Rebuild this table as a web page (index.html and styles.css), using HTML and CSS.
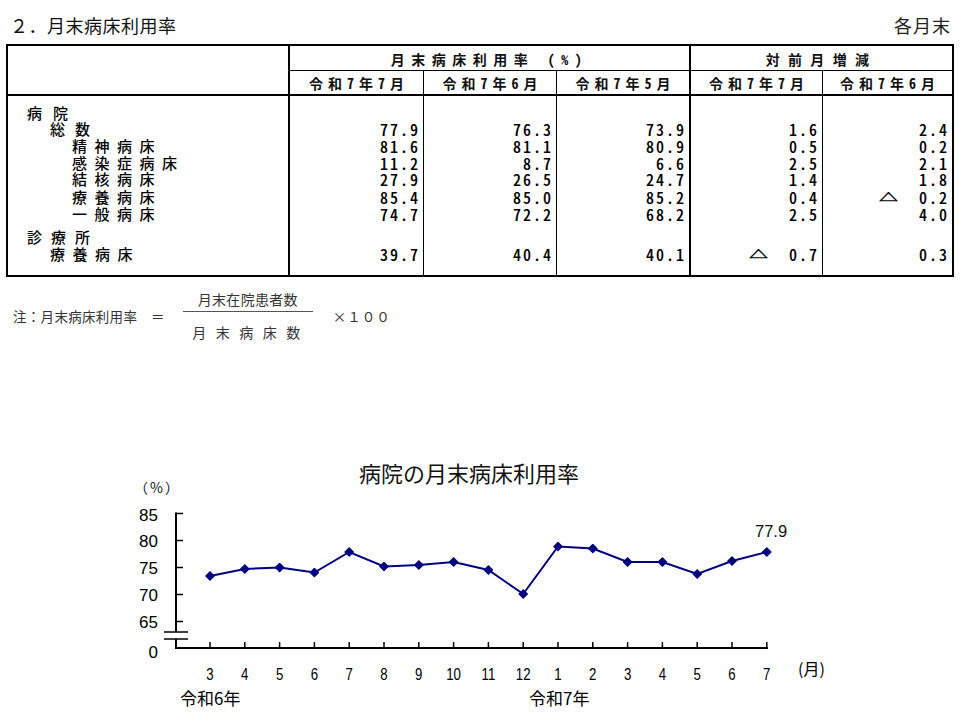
FILE: index.html
```html
<!DOCTYPE html>
<html lang="ja">
<head>
<meta charset="utf-8">
<title>月末病床利用率</title>
<link rel="stylesheet" href="styles.css">
</head>
<body>
<div class="page">
  <header class="title-row">
    <h1 class="title">２．月末病床利用率</h1>
    <span class="unit">各月末</span>
  </header>

  <table class="stats">
    <colgroup>
      <col class="c0"><col class="c1"><col class="c2"><col class="c3"><col class="c4"><col class="c5">
    </colgroup>
    <thead>
      <tr class="h1">
        <th rowspan="2" class="blank"></th>
        <th colspan="3" class="grp">月末病床利用率 （%）</th>
        <th colspan="2" class="grp2">対前月増減</th>
      </tr>
      <tr class="h2">
        <th>令和7年7月</th>
        <th>令和7年6月</th>
        <th>令和7年5月</th>
        <th>令和7年7月</th>
        <th>令和7年6月</th>
      </tr>
    </thead>
    <tbody>
      <tr class="first">
        <td class="lbl lv0 w2">病院</td><td></td><td></td><td></td><td></td><td></td>
      </tr>
      <tr>
        <td class="lbl lv1 w1">総数</td><td>77.9</td><td>76.3</td><td>73.9</td><td>1.6</td><td>2.4</td>
      </tr>
      <tr>
        <td class="lbl lv2">精神病床</td><td>81.6</td><td>81.1</td><td>80.9</td><td>0.5</td><td>0.2</td>
      </tr>
      <tr>
        <td class="lbl lv2">感染症病床</td><td>11.2</td><td>8.7</td><td>6.6</td><td>2.5</td><td>2.1</td>
      </tr>
      <tr>
        <td class="lbl lv2">結核病床</td><td>27.9</td><td>26.5</td><td>24.7</td><td>1.4</td><td>1.8</td>
      </tr>
      <tr>
        <td class="lbl lv2">療養病床</td><td>85.4</td><td>85.0</td><td>85.2</td><td>0.4</td><td><span class="tri">△</span>0.2</td>
      </tr>
      <tr>
        <td class="lbl lv2">一般病床</td><td>74.7</td><td>72.2</td><td>68.2</td><td>2.5</td><td>4.0</td>
      </tr>
      <tr class="gap">
        <td class="lbl lv0 w3">診療所</td><td></td><td></td><td></td><td></td><td></td>
      </tr>
      <tr class="last">
        <td class="lbl lv1">療養病床</td><td>39.7</td><td>40.4</td><td>40.1</td><td><span class="tri">△</span>0.7</td><td>0.3</td>
      </tr>
    </tbody>
  </table>

  <div class="note">
    <span class="note-label">注：月末病床利用率　＝</span>
    <div class="frac">
      <span class="num">月末在院患者数</span>
      <span class="bar"></span>
      <span class="den">月 末 病 床 数</span>
    </div>
    <span class="times">×１００</span>
  </div>

  <svg class="chart" viewBox="0 440 960 280" width="960" height="280">
    <defs>
      <marker id="dia" viewBox="-5 -5 10 10" markerWidth="10" markerHeight="10" markerUnits="userSpaceOnUse">
        <path d="M0 -5 L5 0 L0 5 L-5 0 Z" fill="#000080"/>
      </marker>
    </defs>
    <text class="ch-title" x="469" y="482" text-anchor="middle">病院の月末病床利用率</text>
    <text class="ch-unit" x="134" y="493">（%）</text>

    <g class="axis">
      <line x1="176" y1="512.5" x2="176" y2="632"/>
      <line x1="176" y1="639" x2="176" y2="648"/>
      <line x1="175" y1="648" x2="768" y2="648"/>
    </g>
    <g class="ticks">
      <line x1="176" y1="513.5" x2="183" y2="513.5"/>
      <line x1="176" y1="540.5" x2="183" y2="540.5"/>
      <line x1="176" y1="567.5" x2="183" y2="567.5"/>
      <line x1="176" y1="594.5" x2="183" y2="594.5"/>
      <line x1="176" y1="621.5" x2="183" y2="621.5"/>
      <line x1="164" y1="632" x2="188" y2="632"/>
      <line x1="164" y1="639" x2="188" y2="639"/>
      <line x1="210" y1="642" x2="210" y2="648"/>
      <line x1="244.8" y1="642" x2="244.8" y2="648"/>
      <line x1="279.6" y1="642" x2="279.6" y2="648"/>
      <line x1="314.4" y1="642" x2="314.4" y2="648"/>
      <line x1="349.2" y1="642" x2="349.2" y2="648"/>
      <line x1="384" y1="642" x2="384" y2="648"/>
      <line x1="418.8" y1="642" x2="418.8" y2="648"/>
      <line x1="453.6" y1="642" x2="453.6" y2="648"/>
      <line x1="488.4" y1="642" x2="488.4" y2="648"/>
      <line x1="523.2" y1="642" x2="523.2" y2="648"/>
      <line x1="558" y1="642" x2="558" y2="648"/>
      <line x1="592.8" y1="642" x2="592.8" y2="648"/>
      <line x1="627.6" y1="642" x2="627.6" y2="648"/>
      <line x1="662.4" y1="642" x2="662.4" y2="648"/>
      <line x1="697.2" y1="642" x2="697.2" y2="648"/>
      <line x1="732" y1="642" x2="732" y2="648"/>
      <line x1="766.8" y1="642" x2="766.8" y2="648"/>
    </g>

    <g class="ylab">
      <text x="158" y="521">85</text>
      <text x="158" y="547">80</text>
      <text x="158" y="574">75</text>
      <text x="158" y="601">70</text>
      <text x="158" y="628">65</text>
      <text x="158" y="658">0</text>
    </g>

    <g class="xlab">
      <text x="210" y="680">3</text>
      <text x="244.8" y="680">4</text>
      <text x="279.6" y="680">5</text>
      <text x="314.4" y="680">6</text>
      <text x="349.2" y="680">7</text>
      <text x="384" y="680">8</text>
      <text x="418.8" y="680">9</text>
      <text x="453.6" y="680">10</text>
      <text x="488.4" y="680">11</text>
      <text x="523.2" y="680">12</text>
      <text x="558" y="680">1</text>
      <text x="592.8" y="680">2</text>
      <text x="627.6" y="680">3</text>
      <text x="662.4" y="680">4</text>
      <text x="697.2" y="680">5</text>
      <text x="732" y="680">6</text>
      <text x="766.8" y="680">7</text>
    </g>
    <text class="ch-month" x="798" y="675">(月)</text>
    <text class="ch-year" x="180" y="705">令和6年</text>
    <text class="ch-year" x="529" y="705">令和7年</text>

    <polyline class="series" marker-start="url(#dia)" marker-mid="url(#dia)" marker-end="url(#dia)"
      points="210,576 244.8,569 279.6,567.5 314.4,572.5 349.2,552 384,566.5 418.8,565 453.6,562 488.4,570 523.2,594 558,546.5 592.8,548.5 627.6,562 662.4,562 697.2,574 732,561 766.8,552"/>
    <text class="ch-val" x="755" y="537">77.9</text>
  </svg>
</div>
</body>
</html>
```

FILE: styles.css
```css
* {
  box-sizing: border-box;
}

html,
body {
  margin: 0;
  padding: 0;
  background: #fff;
}

body {
  width: 960px;
  height: 720px;
  overflow: hidden;
  font-family: "Noto Sans CJK JP", sans-serif;
  color: #000;
}

.title-row {
  display: flex;
  justify-content: space-between;
  align-items: center;
  height: 44px;
  padding: 5px 9px 0 10px;
}

.title {
  margin: 0;
  font-size: 18px;
  font-weight: 400;
  letter-spacing: 0.5px;
  color: #111;
}

.unit {
  font-size: 18px;
  letter-spacing: 1px;
  color: #222;
}

/* table */
.stats {
  margin-left: 6px;
  width: 948px;
  table-layout: fixed;
  border-collapse: separate;
  border-spacing: 0;
  border: 2px solid #000;
}

.c0 { width: 282px; }
.c1 { width: 134px; }
.c2 { width: 133px; }
.c3 { width: 134px; }
.c4 { width: 132px; }
.c5 { width: 129px; }

.stats th {
  padding: 0;
  font-size: 14px;
  font-weight: 700;
  text-align: center;
  font-feature-settings: "hwid";
  color: #111;
}

.h1 th {
  height: 25px;
}

.h2 th {
  height: 25px;
  letter-spacing: 5px;
  padding-left: 5px;
  border-bottom: 2px solid #000;
  border-right: 1px solid #000;
}

.h2 th:nth-child(3) {
  border-right-width: 2px;
}

.h2 th:last-child {
  border-right: 0;
}

.stats th.blank {
  border-right: 2px solid #000;
  border-bottom: 2px solid #000;
}

.stats th.grp {
  border-right: 2px solid #000;
  border-bottom: 1px solid #000;
  letter-spacing: 6.5px;
  padding-top: 2px;
}

.stats th.grp2 {
  border-bottom: 1px solid #000;
  letter-spacing: 8.3px;
  padding-top: 2px;
}

.stats td {
  padding: 0 3px 0 0;
  height: 16.7px;
  line-height: 16.7px;
  font-size: 16px;
  font-weight: 500;
  text-align: right;
  letter-spacing: 2px;
  font-feature-settings: "hwid";
  white-space: nowrap;
  color: #000;
}

.stats td:nth-child(1),
.stats td:nth-child(4) {
  border-right: 2px solid #000;
}

.stats td:nth-child(2),
.stats td:nth-child(3),
.stats td:nth-child(5) {
  border-right: 1px solid #000;
}

.stats td.lbl {
  text-align: left;
  font-size: 15px;
  letter-spacing: 7.5px;
}

.stats td.lv0 { padding-left: 19px; }
.stats td.lv1 { padding-left: 42px; }
.stats td.lv2 { padding-left: 64px; }
.stats td.w1 { letter-spacing: 10px; }
.stats td.w2 { letter-spacing: 11px; }
.stats td.w3 { letter-spacing: 9px; }

.stats tr.first td {
  padding-top: 8.5px;
  height: 25.2px;
}

.stats tr.gap td {
  padding-top: 6.2px;
  height: 22.9px;
}

.stats tr.last td {
  padding-bottom: 11.5px;
  height: 28.2px;
}

.tri {
  display: inline-block;
  font-size: 19px;
  font-weight: 700;
  letter-spacing: 0;
  -webkit-text-stroke: 0.6px #000;
  transform: scaleY(0.55);
  margin-right: 21px;
}

/* note */
.note {
  display: flex;
  align-items: center;
  margin-top: 12.5px;
  padding-left: 13px;
  font-size: 13.5px;
  color: #333;
}

.note-label {
  letter-spacing: 0.3px;
}

.frac {
  display: flex;
  flex-direction: column;
  align-items: center;
  width: 130px;
  margin-left: 18px;
  margin-right: 20px;
}

.num {
  font-size: 14px;
  line-height: 20px;
  letter-spacing: 0.3px;
}

.bar {
  width: 130px;
  height: 1px;
  background: #555;
  margin: 2px 0 10px;
}

.den {
  font-size: 14px;
  line-height: 20px;
  letter-spacing: 3.2px;
}

.times {
  letter-spacing: 1px;
}

/* chart */
.chart {
  display: block;
  margin-top: 98px;
}

.ch-title {
  font-family: "Noto Sans CJK JP", sans-serif;
  font-size: 22px;
  fill: #111;
}

.ch-unit {
  font-family: "Noto Sans CJK JP", sans-serif;
  font-size: 14px;
  letter-spacing: 2px;
  fill: #111;
}

.axis line {
  stroke: #000;
  stroke-width: 2;
}

.ticks line {
  stroke: #000;
  stroke-width: 1.5;
}

.ylab text {
  font-family: "Liberation Sans", Arial, sans-serif;
  font-size: 17px;
  text-anchor: end;
  fill: #000;
}

.xlab text {
  font-family: "Liberation Sans", sans-serif;
  font-size: 16.5px;
  text-anchor: middle;
  fill: #000;
  transform-box: fill-box;
  transform-origin: center;
  transform: scaleX(0.8);
}

.ch-month {
  font-family: "Noto Sans CJK JP", sans-serif;
  font-size: 16px;
  fill: #000;
}

.ch-year {
  font-family: "Noto Sans CJK JP", sans-serif;
  font-size: 17px;
  fill: #000;
}

.series {
  fill: none;
  stroke: #000080;
  stroke-width: 2;
}

.ch-val {
  font-family: "Liberation Sans", Arial, sans-serif;
  font-size: 16.5px;
  fill: #111;
}
```
